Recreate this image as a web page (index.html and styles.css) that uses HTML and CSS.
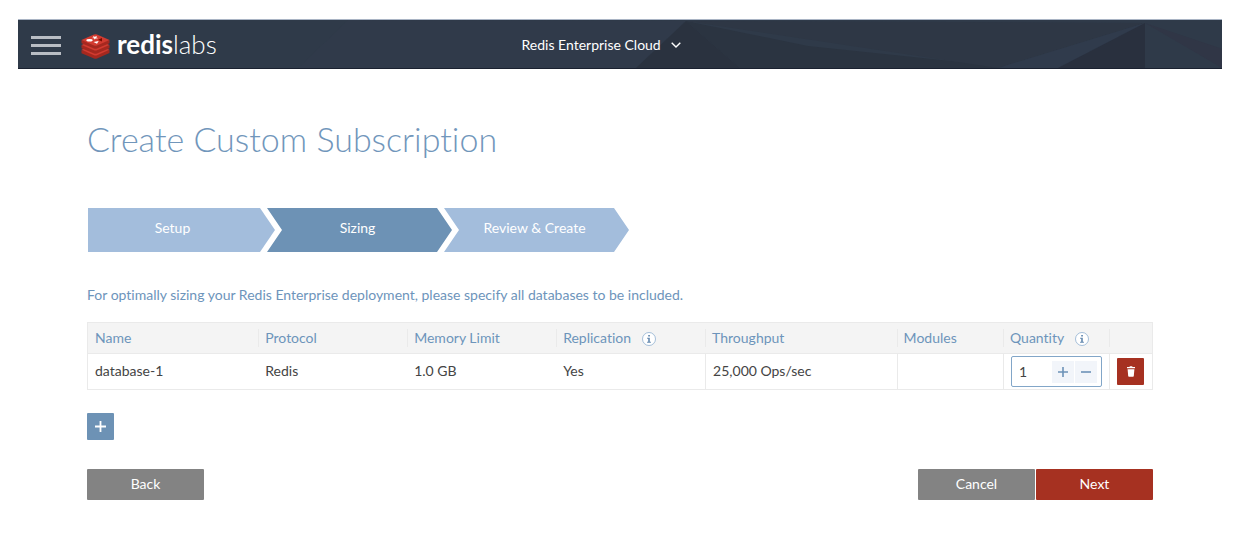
FILE: index.html
```
<!DOCTYPE html>
<html lang="en">
<head>
<meta charset="utf-8">
<meta name="viewport" content="width=device-width, initial-scale=1">
<title>Create Custom Subscription</title>
<link rel="stylesheet" href="styles.css">
</head>
<body>
<header class="topbar">
  <svg class="topbar-facets" viewBox="0 0 1204 50" preserveAspectRatio="none" aria-hidden="true">
    <path d="M330 0 280 50H618L668 1Z" fill="#303a4a"/>
    <path d="M668 1 618 50H722Z" fill="#2a323f"/>
    <path d="M668 1 722 50H1000L790 27Z" fill="#2b3441"/>
    <path d="M668 1 1127 3 980 50Z" fill="#2e3745"/>
    <path d="M1127 3 980 50H1040Z" fill="#303b4c"/>
    <path d="M1127 3 1040 50H1127Z" fill="#29303e"/>
    <path d="M1127 3 1204 50V30Z" fill="#303646"/>
  </svg>
  <div class="topbar-left">
    <button class="menu-button" type="button" aria-label="Menu"><span></span><span></span><span></span></button>
    <a class="brand" href="#">
      <svg class="brand-mark" width="29" height="25" viewBox="0 0 29 25" aria-hidden="true">
        <path d="M.5 16v3.200L13 24.500q1.500.6 3 0L28.500 19v-3.200L15 20Z" fill="#a5281f"/>
        <path d="M.5 15.800 14.500 10 28.500 15.800 16 21.200q-1.500.6-3 0Z" fill="#d23b30"/>
        <path d="M.5 11v3.200L13 19.500q1.500.6 3 0L28.500 14.200V11L15 15Z" fill="#a5281f"/>
        <path d="M.5 11 14.500 5 28.500 11 16 16.200q-1.500.6-3 0Z" fill="#d23b30"/>
        <path d="M.5 6v3.200L13 14.500q1.500.6 3 0L28.500 9.200V6L15 10Z" fill="#a5281f"/>
        <path d="M.5 6 13 .6q1.500-.5 3 0L28.500 6 16 11.400q-1.500.6-3 0Z" fill="#d23b30"/>
        <path d="m12 2 1.700.7L16 2l-.7 1.500 2 .8-2.700.2-1 1.100-.6-1.300-2.300-.2 2-.7Z" fill="#fff"/>
        <ellipse cx="8.500" cy="6.300" rx="3.200" ry="1.200" fill="#fff"/>
        <path d="m12.500 8 5.200-.9-1.700 2.700Z" fill="#fff"/>
        <path d="m17 5.800 4-1.700v3.300Z" fill="#7a0c00"/>
      </svg>
      <span class="brand-name"><b>redis</b>labs</span>
    </a>
  </div>
  <div class="product">
    <select class="product-select" aria-label="Product">
      <option>Redis Enterprise Cloud</option>
    </select>
    <svg class="product-arrow" width="10" height="6" viewBox="0 0 10 6" aria-hidden="true"><path d="m.7.700 4.300 4.300L9.300.7" fill="none" stroke="#fff" stroke-width="1.400"/></svg>
  </div>
</header>

<main class="content">
  <h1 class="title">Create Custom Subscription</h1>

  <ol class="steps">
    <li class="step step-first">Setup</li>
    <li class="step step-current" aria-current="step">Sizing</li>
    <li class="step">Review &amp; Create</li>
  </ol>

  <p class="intro">For optimally sizing your Redis Enterprise deployment, please specify all databases to be included.</p>

  <table class="databases">
    <colgroup>
      <col class="col-name"><col class="col-text"><col class="col-text"><col class="col-text">
      <col class="col-throughput"><col class="col-small"><col class="col-small"><col class="col-action">
    </colgroup>
    <thead>
      <tr>
        <th><div class="head">Name</div></th>
        <th><div class="head">Protocol</div></th>
        <th><div class="head">Memory Limit</div></th>
        <th><div class="head">Replication
          <svg class="info" width="14" height="14" viewBox="0 0 14 14" aria-hidden="true"><circle cx="7" cy="7" r="6.500" fill="#fff" stroke="#8fb0d0" stroke-width=".8"/><path d="M6.200 3h1.700v1.600H6.200ZM5.100 5.700h2.700v4h1.100v1.100H5.100V9.700h1.100v-3H5.100Z" fill="#6288ae"/></svg></div></th>
        <th><div class="head">Throughput</div></th>
        <th><div class="head">Modules</div></th>
        <th><div class="head" id="quantity-label">Quantity
          <svg class="info" width="14" height="14" viewBox="0 0 14 14" aria-hidden="true"><circle cx="7" cy="7" r="6.500" fill="#fff" stroke="#8fb0d0" stroke-width=".8"/><path d="M6.200 3h1.700v1.600H6.200ZM5.100 5.700h2.700v4h1.100v1.100H5.100V9.700h1.100v-3H5.100Z" fill="#6288ae"/></svg></div></th>
        <th><div class="head"></div></th>
      </tr>
    </thead>
    <tbody>
      <tr>
        <td>database-1</td>
        <td>Redis</td>
        <td>1.0 GB</td>
        <td>Yes</td>
        <td class="ruled">25,000 Ops/sec</td>
        <td class="ruled"></td>
        <td class="ruled control">
          <div class="quantity">
            <input class="quantity-input" type="text" inputmode="numeric" value="1" aria-labelledby="quantity-label">
            <button class="quantity-step" type="button" aria-label="Increase"><svg width="10" height="10" viewBox="0 0 10 10" aria-hidden="true"><path d="M0 5h10M5 0v10" stroke="#6d93b8" stroke-width="1.600"/></svg></button>
            <button class="quantity-step" type="button" aria-label="Decrease"><svg width="10" height="10" viewBox="0 0 10 10" aria-hidden="true"><path d="M0 5h10" stroke="#6d93b8" stroke-width="1.600"/></svg></button>
          </div>
        </td>
        <td class="ruled control">
          <button class="square square-delete" type="button" aria-label="Delete database"><svg width="8" height="11" viewBox="0 0 8 11" aria-hidden="true"><path d="M0 1h2.300L3 .2h2L5.700 1H8v1.200H0ZM.6 3.200h6.800L6.800 10q-.1.800-.8.800H2q-.7 0-.8-.8Z" fill="#fff"/></svg></button>
        </td>
      </tr>
    </tbody>
  </table>

  <button class="square square-add" type="button" aria-label="Add database"><svg width="11" height="11" viewBox="0 0 11 11" aria-hidden="true"><path d="M0 5.500h11M5.500 0v11" stroke="#fff" stroke-width="1.800"/></svg></button>

  <div class="actions">
    <button class="button" type="button">Back</button>
    <div class="actions-right">
      <button class="button" type="button">Cancel</button>
      <button class="button button-primary" type="button">Next</button>
    </div>
  </div>
</main>
</body>
</html>
```

FILE: styles.css
```
* {
  box-sizing: border-box;
}

body {
  margin: 0;
  padding: 19px 18px;
  background: #fff;
  color: #444;
  font: 14px/20px Lato, "Liberation Sans", sans-serif;
  font-variant-ligatures: none;
}

button,
input,
select {
  margin: 0;
  padding: 0;
  border: 0;
  font: inherit;
}

.topbar {
  position: relative;
  display: grid;
  grid-template-columns: 1fr auto 1fr;
  align-items: center;
  height: 50px;
  padding-top: 2px;
  padding-right: 38px;
  border-top: 1px solid #a9b4c4;
  border-bottom: 1px solid #1a2130;
  background: #2f3a49;
}

.topbar-facets {
  position: absolute;
  inset: 0;
  width: 100%;
  height: 100%;
}

.topbar-left {
  position: relative;
  display: flex;
  align-items: center;
  gap: 20px;
  padding-left: 13px;
}

.menu-button {
  display: flex;
  flex-direction: column;
  gap: 5px;
  width: 30px;
  background: none;
}

.menu-button span {
  width: 100%;
  height: 3px;
  background: #b9bdc4;
}

.brand {
  display: flex;
  align-items: center;
  gap: 7px;
  color: #fff;
  text-decoration: none;
}

.brand-mark {
  margin-top: 2px;
}

.brand-name {
  padding-bottom: 3px;
  font-size: 26px;
  font-weight: 300;
  line-height: 28px;
}

.brand-name b {
  font-weight: 700;
}

.product {
  position: relative;
  display: flex;
  align-items: center;
}

.product-select {
  padding-right: 19px;
  appearance: none;
  background: none;
  color: #fff;
}

.product-arrow {
  position: absolute;
  right: 0;
  pointer-events: none;
}

.content {
  padding: 48px 69px 0;
}

.title {
  margin: 0;
  color: #7196bb;
  font-size: 34px;
  font-weight: 300;
  line-height: 44px;
}

.steps {
  display: flex;
  margin: 47px 0 0;
  padding: 0 0 0 1px;
  list-style: none;
}

.step {
  width: 185px;
  height: 44px;
  margin-left: -8px;
  padding-right: 4px;
  background: #a3bddc;
  clip-path: polygon(0 0, calc(100% - 15px) 0, 100% 50%, calc(100% - 15px) 100%, 0 100%, 15px 50%);
  color: #fff;
  line-height: 40px;
  text-align: center;
}

.step-first {
  width: 187px;
  margin-left: 0;
  padding-right: 18px;
  clip-path: polygon(0 0, calc(100% - 15px) 0, 100% 50%, calc(100% - 15px) 100%, 0 100%);
}

.step-current {
  background: #6d92b5;
}

.intro {
  margin: 33px 0 17px;
  color: #6d94bb;
}

.databases {
  width: 100%;
  border: 1px solid #eaeaea;
  border-spacing: 0;
  table-layout: fixed;
}

.col-name {
  width: 16%;
}

.col-text {
  width: 14%;
}

.col-throughput {
  width: 18%;
}

.col-small {
  width: 10%;
}

.col-action {
  width: 4%;
}

.databases th {
  height: 31px;
  padding: 0;
  border-bottom: 1px solid #eaeaea;
  background: #f4f4f4;
  color: #6d94bb;
  font-weight: 400;
  text-align: left;
}

.head {
  display: flex;
  align-items: center;
  gap: 11px;
  height: 18px;
  padding-left: 6px;
  border-left: 1px solid #eaeaea;
}

th:first-child .head {
  border-left-color: transparent;
}

.info {
  margin-top: 2px;
}

.databases td {
  height: 35px;
  padding: 0 0 2px 7px;
}

.databases .control {
  padding-bottom: 0;
}

.databases .ruled {
  border-left: 1px solid #eaeaea;
}

.quantity {
  display: flex;
  align-items: center;
  gap: 1px;
  width: 91px;
  height: 31px;
  padding: 0 4px 0 7px;
  border: 1px solid #82a6c8;
  border-radius: 2px;
}

.quantity-input {
  flex: 1;
  min-width: 0;
  color: #444;
}

.quantity-step {
  display: flex;
  align-items: center;
  justify-content: center;
  width: 22px;
  height: 22px;
  background: #f2f5fa;
}

.square {
  display: flex;
  align-items: center;
  justify-content: center;
  width: 27px;
  height: 27px;
  border-radius: 1px;
}

.square-delete {
  background: #a63121;
}

.square-add {
  margin-top: 23px;
  padding-bottom: 1px;
  background: #6d92b5;
}

.actions {
  display: flex;
  justify-content: space-between;
  margin-top: 29px;
}

.actions-right {
  display: flex;
  gap: 1px;
}

.button {
  width: 117px;
  height: 31px;
  padding-bottom: 2px;
  border-radius: 1px;
  background: #838383;
  color: #fff;
}

.button-primary {
  background: #a63121;
}
```
